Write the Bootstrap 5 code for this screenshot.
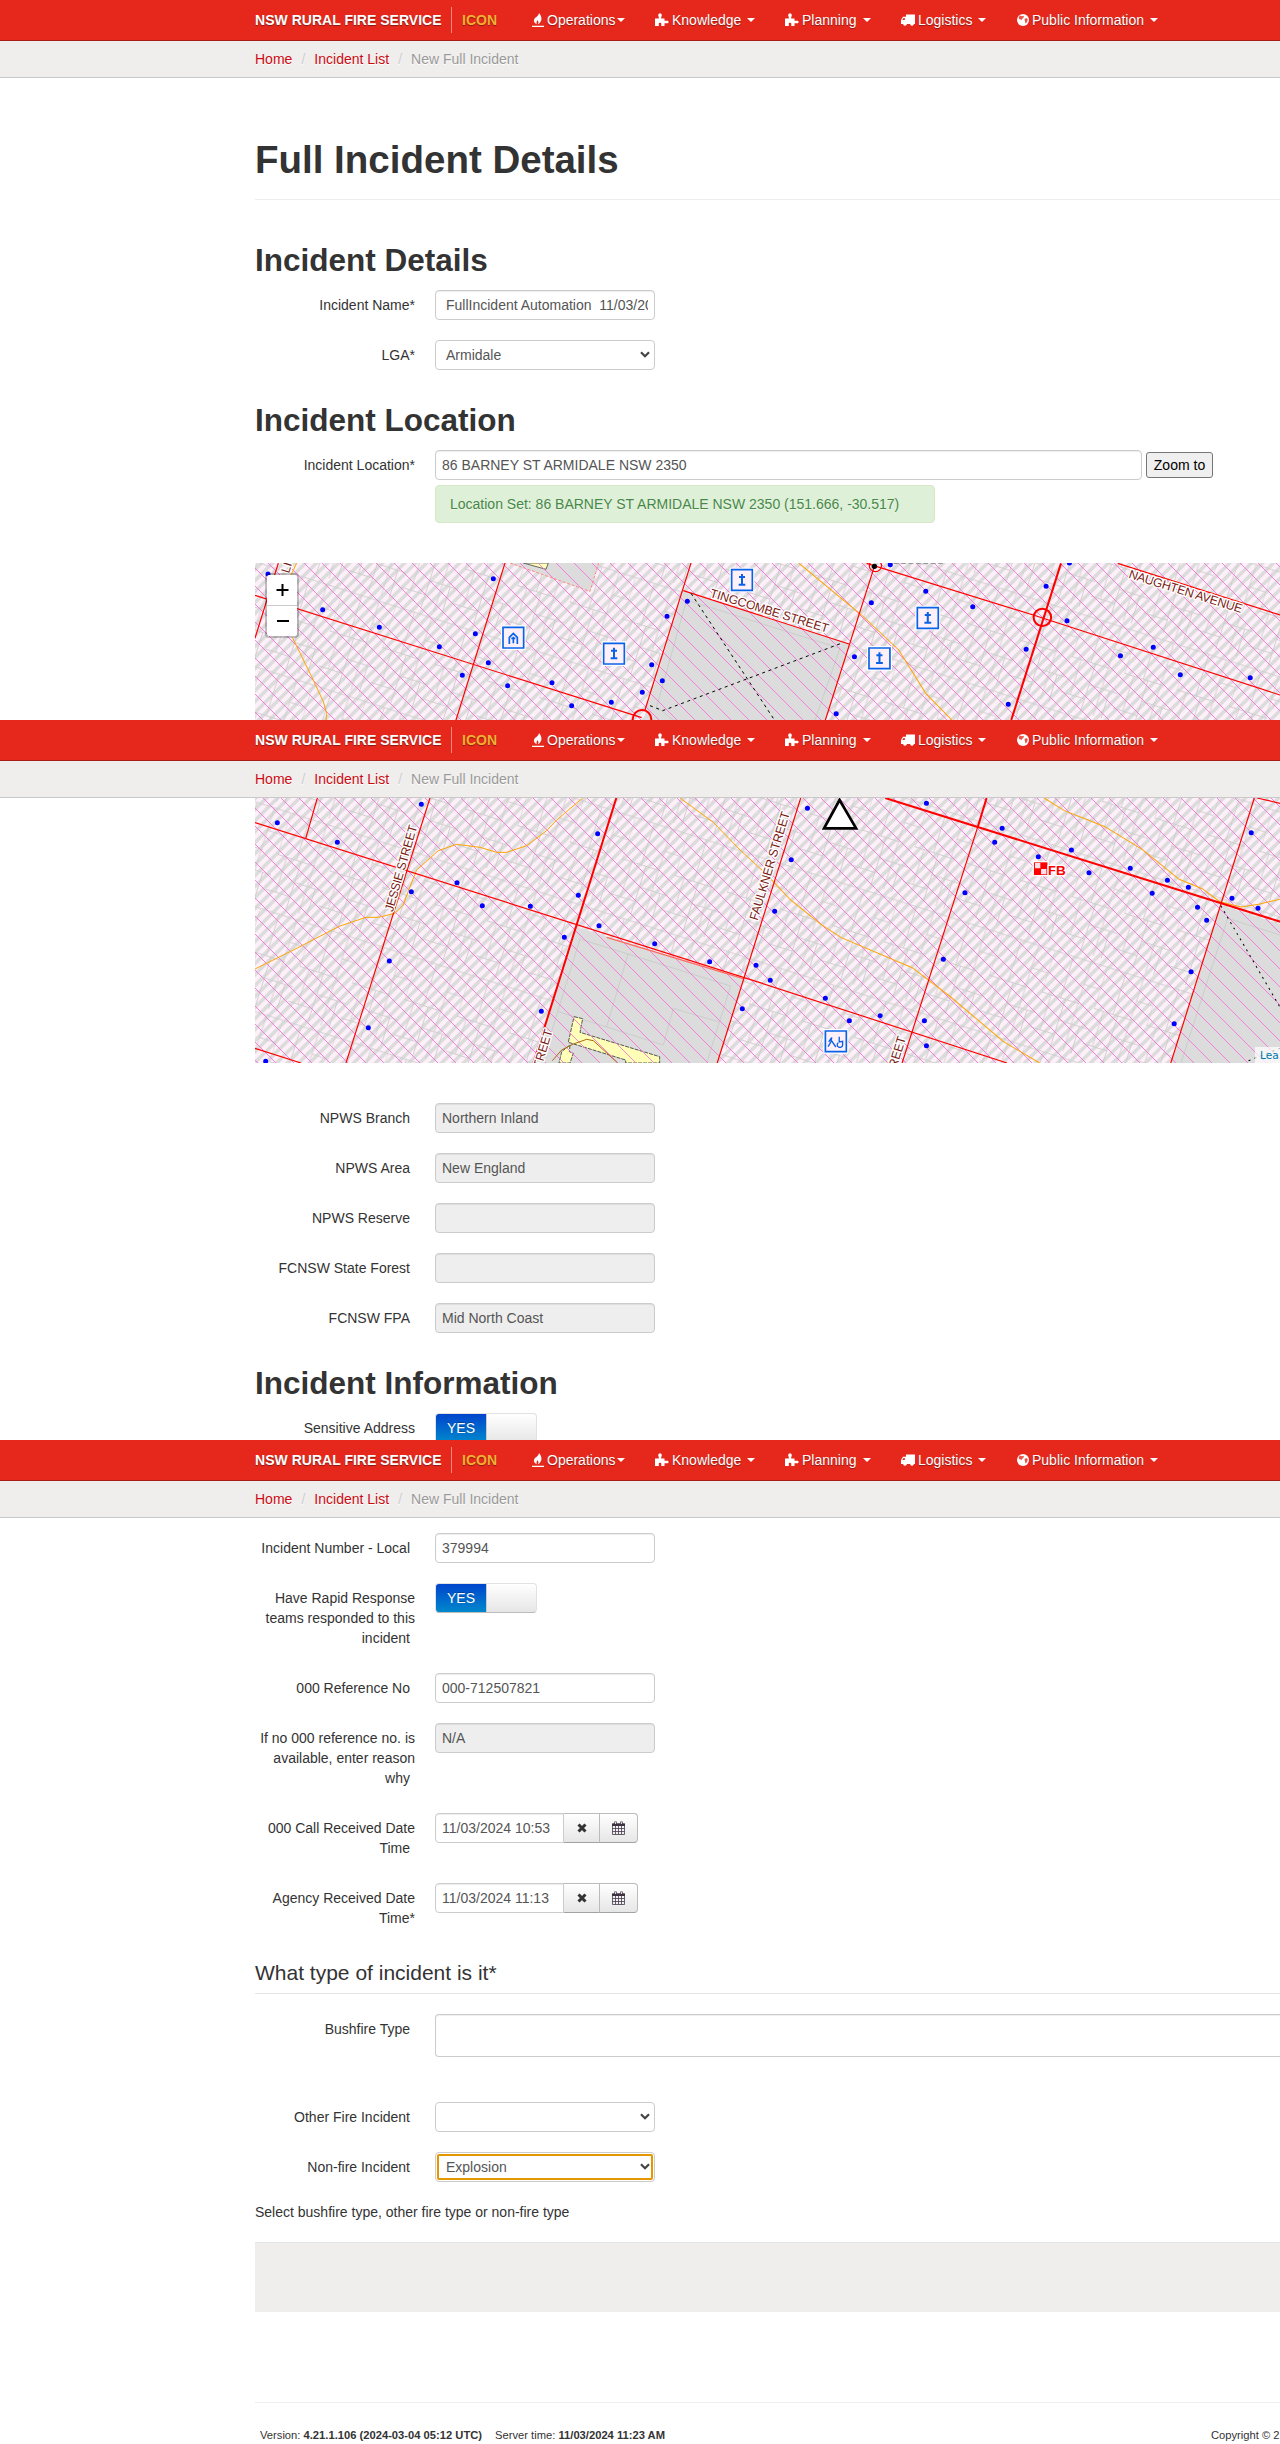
<!DOCTYPE html>
<html lang="en">
<head>
<meta charset="utf-8">
<title>New Full Incident</title>
<link rel="stylesheet" href="https://cdn.jsdelivr.net/npm/bootstrap@5.3.0/dist/css/bootstrap.min.css">
<style>
body{font:14px/20px "Liberation Sans",Arial,sans-serif;color:#333;background:#fff;overflow-x:hidden}
.frame{height:720px;overflow:hidden}
.frame-last{height:1004px}
.inner{margin-left:255px}
.topbar{height:41px;padding:0 0 0 255px;background:#e6281c;border-bottom:1px solid #a81e16;color:#fff;flex-wrap:nowrap;justify-content:flex-start;align-items:flex-start;text-shadow:0 1px 1px rgba(0,0,0,.4)}
.brand{width:196px;font-weight:700;line-height:20px;margin-top:10px;white-space:nowrap;letter-spacing:.02px}
.brand-app{width:81px;margin-top:7px;height:26px;line-height:26px;padding-left:10px;border-left:1px solid #f0867f;color:#f3b033;font-weight:700}
.menu-item{margin-top:10px;display:flex;align-items:center;white-space:nowrap;height:20px}
.menu-item svg{flex:none;fill:#fff;margin-right:3px}
.menu-item i{border:4px solid transparent;border-top-color:#fff;border-bottom:0;margin-left:6px}
.w-ops{width:123px}.w-know{width:130px}.w-plan,.w-logi{width:116px}
.w-ops i{margin-left:2px}
.crumbs{height:37px;background:#efeeed;border-bottom:1px solid #c9c9c9;padding:8px 0 0 255px;margin:0;text-shadow:0 1px 0 #fff;color:#999}
.crumbs a{color:#cb0a10;text-decoration:none}
.crumbs b{font-weight:400;color:#ccc;width:22px;text-align:center}
h1,h2{font-weight:700;line-height:40px;margin:0}
h1{font-size:38.5px}
h2{font-size:31.5px;margin-bottom:10px}
.title-wrap{padding-top:62px;height:122px;border-bottom:1px solid #eee;margin-bottom:40px}
.field+h2{margin-top:30px}
.field{display:flex;margin-bottom:20px}
.field>label{width:160px;padding-top:5px;margin:0 20px 5px 0;text-align:right;flex:none}
.field>label.opt::after{content:"";display:inline-block;width:5px}
.ctl{font:14px/20px "Liberation Sans",Arial,sans-serif;width:220px;height:30px;padding:4px 6px;border:1px solid #ccc;border-radius:4px;color:#555;background-color:#fff;box-shadow:inset 0 1px 1px rgba(0,0,0,.075);white-space:pre;overflow:hidden;flex:none}
.ctl.off{background:#eee}
.ctl.pad{padding-left:10px}
.ctl.addr{width:707px}
.clip span{display:block;overflow:hidden;width:202px}
.pick{display:flex;justify-content:space-between;padding:4px 4px 4px 10px;box-shadow:none}
.pick svg{margin-top:6px}
.focusring{outline:2px solid #e59700;outline-offset:-4px}
.zoombtn{font:14px/20px "Liberation Sans",Arial,sans-serif;border:1px solid #767676;border-radius:3px;background:#efefef;color:#000;padding:0;width:67px;height:26px;margin:2px 0 0 4px}
.okbox{width:500px;height:38px;margin:-20px 0 40px 180px;padding:8px 14px;background:#dff0d8;border:1px solid #d6e9c6;border-radius:4px;color:#468847;text-shadow:0 1px 0 rgba(255,255,255,.5)}
.mapbox{position:relative;width:1025px;overflow:hidden;line-height:0}
.mapbox text{font-family:"Liberation Sans",Arial,sans-serif;fill:#7a1a12;stroke:#fff;stroke-width:8px;paint-order:stroke;stroke-linejoin:round;font-size:37px}
.zoomctl{position:absolute;left:10px;top:10px;width:34px;height:65px;border:2px solid rgba(0,0,0,.22);border-radius:4px;background:#fff;background-clip:padding-box;display:flex;flex-direction:column}
.zoomctl svg{height:30px;width:30px}
.zoomctl svg+svg{border-top:1px solid #ccc;height:31px}
.attrib{position:absolute;right:0;bottom:0;height:16px;line-height:16px;padding-left:5px;background:rgba(255,255,255,.7);color:#0078a8;font-family:"DejaVu Sans",sans-serif;font-size:10.5px;width:25px;white-space:nowrap}
.toggle{display:flex;width:102px;height:30px;border:1px solid #e2e2e2;border-bottom-color:#bbb;border-radius:4px;overflow:hidden;background:linear-gradient(#fff,#e6e6e6)}
.toggle span{width:51px;border-right:1px solid #ccc;background:linear-gradient(#04c,#08c);color:#fff;text-align:center;line-height:28px;text-shadow:0 -1px 0 rgba(0,0,0,.25)}
.stamp{width:129px;border-radius:4px 0 0 4px}
.gbtn{height:30px;border:1px solid #bbb;border-left-width:0;border-bottom-color:#a2a2a2;background:linear-gradient(#fff,#e6e6e6);display:flex;align-items:center;justify-content:center}
.gx{width:36px}.gc{width:38px;border-radius:0 4px 4px 0}
.legend-q{font-size:21px;line-height:40px;border-bottom:1px solid #e5e5e5;margin-bottom:20px}
.area{height:43px;width:845px;border-right:0;border-radius:4px 0 0 4px}
.greybar{height:70px;background:#efeeed;border-top:1px solid #e5e5e5;margin-bottom:90px}
.foot{border-top:1px solid #eee;padding:22px 0 0 5px;font-size:11.2px;line-height:20px;display:flex;height:42px;white-space:nowrap}
</style>
</head>
<body>
<svg width="0" height="0" class="position-absolute">
<defs>
<symbol id="i-fire" viewBox="0 0 12 14"><path d="M7 0c2 2.500 2.800 4.500 2.300 7-.6 2.500-2 3.500-3.500 4.300 1-1.500.8-2.800-.2-4-1 1-1.500 2.500-.6 4-2.300-.8-3.300-2.300-3-4.300.3-2 2-2.500 3.500-4C6.500 2 7 1 7 0zM0 12.800h12v1.200H0z"/></symbol>
<symbol id="i-puzzle" viewBox="0 0 14 14"><path d="M0 5.500h3.800V4C2.800 3 3 .3 5 .3S7.200 3 6.200 4v1.500H9.500v2.300h2c2.800-1 2.800 3.200 0 2.400h-2V13H6.300v-2.300c0-1.300-2.500-1.300-2.500 0V13H0z"/></symbol>
<symbol id="i-truck" viewBox="0 0 14 14"><path d="M5 1.500h9V11h-1.200a1.800 1.800 0 0 1-3.600 0H5.800a1.800 1.800 0 0 1-3.600 0H0V7l2-3.200h3zM1.300 7h2.500V4.900H2.600z" fill-rule="evenodd"/><circle cx="4" cy="11" r="1.300"/><circle cx="11" cy="11" r="1.300"/></symbol>
<symbol id="i-globe" viewBox="0 0 12 12"><circle cx="6" cy="6" r="6"/><path d="M3 1.500l2 .8 1.500-.6.5 1.300-1.500 1.500-1 1.500-1.500-1-1 .3-.3-2zM7.500 5l2-1 1.300 1.500-.8 2.500-1.500 1.500-.5-2z" fill="#e6281c" opacity=".8"/></symbol>
<symbol id="i-chev" viewBox="0 0 10 7"><path d="M1 1.200l4 4 4-4" fill="none" stroke="#444" stroke-width="2.200"/></symbol>
<symbol id="i-x" viewBox="0 0 10 10"><path d="M1.500 1.500l7 7M8.500 1.500l-7 7" stroke="#333" stroke-width="3"/></symbol>
<symbol id="i-cal" viewBox="0 0 13 14"><path d="M.5 3h12v10.500H.5zM.5 7.500h12M.5 10.500h12M3.500 5v8.500M6.500 5v8.500M9.500 5v8.500" fill="none" stroke="#453a4c" stroke-width=".8"/><path d="M0 2.500h13V5H0z" fill="#3a3040"/><path d="M3.500.5v3M9.500.5v3" stroke="#453a4c" stroke-width="2.400"/><path d="M3.500 1v2M9.500 1v2" stroke="#fff" stroke-width=".8"/></symbol>
<pattern id="lots" width="165" height="300" patternUnits="userSpaceOnUse" patternTransform="rotate(17.6)"><path fill="none" stroke="#ccc" stroke-width="2.600" d="M0 20H165M0 150H120M60 20V150M115 20V300M0 150V20M30 150V260M75 150V300M115 90H165M75 215H165M0 260H75M140 215V300"/></pattern>
<pattern id="grey" x="45" width="33" height="33" patternUnits="userSpaceOnUse"><path fill="#fdf0f8" d="M0 0h33v33H0z"/><path fill="#dcdcdc" d="M0 33L33 0H18L0 18zM33 33V18L18 33z"/></pattern>
<pattern id="pink" x="45" width="54" height="54" patternUnits="userSpaceOnUse"><path stroke="#f76fdc" stroke-width="2.600" d="M-6-6L60 60M-6 48L6 60M48-6L60 6"/></pattern>
<g id="pin"><path d="M-33-33h66v66h-66z" fill="#fdf0f8" stroke="#fff" stroke-width="8"/><path d="M-31-31h62v62h-62z" fill="none" stroke="#0a62e8" stroke-width="5"/></g>
<g id="cross"><use href="#pin"/><path d="M0-18V14M-9-9H9M-10 14H10" stroke="#0a62e8" stroke-width="6" fill="none"/></g>
</defs>
</svg>

<section class="frame">
 <nav class="topbar navbar"><div class="brand">NSW RURAL FIRE SERVICE</div><div class="brand-app">ICON</div>
  <div class="menu-item w-ops"><svg width="12" height="14"><use href="#i-fire"/></svg>Operations<i></i></div>
  <div class="menu-item w-know"><svg width="14" height="14"><use href="#i-puzzle"/></svg>Knowledge<i></i></div>
  <div class="menu-item w-plan"><svg width="14" height="14"><use href="#i-puzzle"/></svg>Planning<i></i></div>
  <div class="menu-item w-logi"><svg width="14" height="14"><use href="#i-truck"/></svg>Logistics<i></i></div>
  <div class="menu-item"><svg width="12" height="12"><use href="#i-globe"/></svg>Public Information<i></i></div></nav>
 <div class="crumbs d-flex"><a href="#">Home</a><b>/</b><a href="#">Incident List</a><b>/</b><span>New Full Incident</span></div>
 <main class="inner">
  <div class="title-wrap"><h1>Full Incident Details</h1></div>
  <h2>Incident Details</h2>
  <div class="field"><label>Incident Name*</label><div class="ctl pad clip"><span>FullIncident Automation  11/03/2024</span></div></div>
  <div class="field mb-0"><label>LGA*</label><div class="ctl pick">Armidale<svg width="10" height="7"><use href="#i-chev"/></svg></div></div>
  <h2>Incident Location</h2>
  <div class="field mb-4 pb-0"><label>Incident Location*</label><div class="ctl addr">86 BARNEY ST ARMIDALE NSW 2350</div><button class="zoombtn">Zoom to</button></div>
  <div class="okbox" style="margin-top:-19px">Location Set: 86 BARNEY ST ARMIDALE NSW 2350 (151.666, -30.517)</div>
  <div class="mapbox">
   <svg width="1025" height="157" viewBox="45 39 3075 471">
    <path fill="url(#grey)" d="M45 39H3120V510H45z"/><path fill="url(#lots)" d="M45 39H3120V510H45z"/>
    <path d="M1330 122L1827 282 1756 510H1210zM810 39L1050 124 1076 39z" fill="#dcdcdc"/>
    <path d="M1340 150L1800 295 1725 510M1340 150L1250 470 1300 510" fill="none" stroke="#ccc" stroke-width="3"/>
    <path d="M850 39L918 58 925 39z" fill="#ffffb8" stroke="#666" stroke-width="3"/>
    <path d="M810 39L1050 124 1076 39" fill="none" stroke="#ff8a80" stroke-width="3" stroke-dasharray="9 5"/>
    <path fill="url(#pink)" d="M45 39H3120V510H45z"/>
    <path d="M170 39L152 78M157 262L215 380 250 455 260 490 258 510" fill="none" stroke="#ffa500" stroke-width="3"/>
    <g fill="none" stroke="#f00" stroke-width="3.500"><path d="M45 136L1205 503M115 39L45 265M795 39L648 510M1353 39L1215 480M1330 122L1827 282"/>
    <circle cx="1206" cy="508" r="28" stroke-width="6"/></g>
    <path d="M1353 130L1600 505M1230 467L1268 482 1809 278" fill="none" stroke="#000" stroke-width="3" stroke-dasharray="9 11"/>
    <path d="M84 72h0M248 179h0M418 232h0M598 290h0M760 86h0M706 251h0M745 338h0M667 376h0M803 407h0M936 398h0M995 467h0M1114 457h0M1207 427h0M1235 344h0M1267 392h0M1281 199h0M1342 154h0" stroke="#00f" stroke-width="15" stroke-linecap="round"/>
    <g transform="translate(-21.400 0) scale(1.014 1)">
     <path d="M1675 40L1860 195 1970 300 2050 430 2127 510" fill="none" stroke="#ffa500" stroke-width="3"/>
     <g fill="none" stroke="#f00" stroke-width="3.500"><path d="M1875 40L2368 195 3098 435 3120 441M1898 49L1753 510M2618 40L3120 202"/><path d="M2450 40L2303 510" stroke-width="6"/><circle cx="2395" cy="202" r="26" stroke-width="6"/><circle cx="1901" cy="47" r="18"/></g><circle cx="1898" cy="49" r="8"/>
     <path d="M1945 44h0M2050 124h0M1889 158h0M2189 170h0M1839 320h0M1785 491h0M2406 109h0M2475 39h0M2468 212h0M2347 298h0M2294 463h0M2626 317h0M2723 292h0M2803 374h0M3010 383h0" stroke="#00f" stroke-width="15" stroke-linecap="round"/>
     <use href="#cross" x="2056" y="204"/><use href="#cross" x="1913" y="325"/>
     <text transform="translate(2648 83) rotate(17.600)" textLength="351">NAUGHTEN AVENUE</text>
     <path d="M1955 40h145" stroke="#999" stroke-width="4" stroke-dasharray="14 8"/>
    </g>
    <use href="#cross" x="1506" y="90"/><use href="#cross" x="1122" y="311"/><use href="#pin" x="820" y="263"/>
    <path d="M808 282V262L820 250 832 262V282M814 265h12M820 260v20" fill="none" stroke="#0a62e8" stroke-width="5"/>
    <text transform="translate(1408 140) rotate(17)" textLength="370">TINGCOMBE STREET</text>
    <text transform="translate(147 71) rotate(-73)">LI</text>
   </svg>
   <div class="zoomctl"><svg viewBox="0 0 30 30"><path d="M9.500 15h12M15.500 9v12" stroke="#000" stroke-width="2"/></svg><svg viewBox="0 0 30 30"><path d="M10 15h12" stroke="#000" stroke-width="2"/></svg></div>
  </div>
 </main>
</section>

<section class="frame">
 <nav class="topbar navbar"><div class="brand">NSW RURAL FIRE SERVICE</div><div class="brand-app">ICON</div>
  <div class="menu-item w-ops"><svg width="12" height="14"><use href="#i-fire"/></svg>Operations<i></i></div>
  <div class="menu-item w-know"><svg width="14" height="14"><use href="#i-puzzle"/></svg>Knowledge<i></i></div>
  <div class="menu-item w-plan"><svg width="14" height="14"><use href="#i-puzzle"/></svg>Planning<i></i></div>
  <div class="menu-item w-logi"><svg width="14" height="14"><use href="#i-truck"/></svg>Logistics<i></i></div>
  <div class="menu-item"><svg width="12" height="12"><use href="#i-globe"/></svg>Public Information<i></i></div></nav>
 <div class="crumbs d-flex"><a href="#">Home</a><b>/</b><a href="#">Incident List</a><b>/</b><span>New Full Incident</span></div>
 <main class="inner">
  <div class="mapbox" style="margin-bottom:40px">
   <svg width="1025" height="265" viewBox="45 24 3075 795">
    <path fill="url(#grey)" d="M45 24H3120V819H45z"/><path fill="url(#lots)" d="M45 24H3120V819H45z"/>
    <path d="M1005 410L1510 565 1433 819H880zM2943 345L3120 402V819H2794z" fill="#dcdcdc"/>
    <path d="M1020 447L1472 588 1400 819M1020 447L930 740M1165 490L1100 710M955 665L1270 765 1300 655 1440 697M2963 385L3120 435M2963 385L2823 819" fill="none" stroke="#ccc" stroke-width="3"/>
    <path d="M1002 680L1028 686 1020 727 1259 800V819H1157V810L985 757zM990 765L988 785 1000 790 990 819H957L965 785z" fill="#ffffb8" stroke="#555" stroke-width="3" stroke-dasharray="12 3"/>
    <path fill="url(#pink)" d="M45 24H3120V819H45z"/>
    <path d="M937 812L965 780 1000 762 1040 748 1060 752 1133 819" fill="none" stroke="#a96a10" stroke-width="3"/>
    <path d="M45 537L160 480 300 408 378 382H415L465 370 490 345 510 290 530 240 595 182 650 163 720 172 770 187H800L860 167 920 122 950 90 1028 24M1320 24L1420 97 1500 180 1560 235" fill="none" stroke="#ffa500" stroke-width="3"/>
    <g fill="none" stroke="#f00" stroke-width="3.500"><path d="M45 98L1560 578 2301 819M232 24L197 146M570 24L318 819M45 775L183 819"/><path d="M1129 24L880 819" stroke-width="6"/></g>
    <path d="M1100 442L1510 566" stroke="#ff6a60" stroke-width="4"/>
    <path d="M112 98h0M292 157h0M544 43h0M651 278h0M514 305h0M727 347h0M871 349h0M1073 131h0M1015 316h0M973 442h0M1077 407h0M1244 461h0M1409 515h0M448 513h0M385 713h0M77 814h0M904 664h0M1507 656h0M1548 526h0" stroke="#00f" stroke-width="15" stroke-linecap="round"/>
    <g transform="translate(-21.400 0) scale(1.014 1)">
     <path d="M1560 235L1590 265 1650 330 1740 403 1800 443 2010 533 2120 618 2280 755 2387 819M2400 24L2460 62 2580 110 2690 178 2800 268 2868 296 2920 335 2983 351 3035 343 3120 322" fill="none" stroke="#ffa500" stroke-width="3"/>
     <g fill="none" stroke="#f00" stroke-width="3.500"><path d="M1680 24L1433 819M2204 110L1980 819M3022 24L2775 819M3030 24L3120 45"/><path d="M2230 24L2204 110M1930 24L3120 402" stroke-width="6"/></g>
     <path d="M2923 347L3120 690M3005 812L3120 766" fill="none" stroke="#000" stroke-width="3" stroke-dasharray="6 13"/>
     <path d="M1700 55h0M1652 209h0M1603 364h0M2052 40h0M2276 115h0M2254 157h0M2383 200h0M2481 180h0M2533 248h0M2655 235h0M2765 271h0M2827 292h0M2720 310h0M2854 352h0M2881 391h0M2956 325h0M3033 355h0M3013 128h0M2166 308h0M2102 508h0M2835 545h0M2785 701h0M1590 571h0M1753 625h0M1824 692h0M1915 677h0M2046 692h0M2052 767h0" stroke="#00f" stroke-width="15" stroke-linecap="round"/>
     <path d="M1795 30L1749 115H1844z" fill="#fff" stroke="#000" stroke-width="8"/>
     <path d="M2366 213h48v46h-48z" fill="#fff"/><path d="M2370 217h40v38h-40z" fill="#f00"/><path d="M2373 219h16v16h-16zM2391 237h16v16h-16z" fill="#ffe0e4"/>
     <text x="2412" y="255" style="font-weight:700;fill:#f00;font-size:40px" textLength="52">FB</text>
     <use href="#pin" x="1784" y="754"/><path d="M1772 742L1769 756 1761 770M1770 744L1763 756M1771 752L1784 771M1794 740V756L1804 754V764A8 8 0 1 1 1791 758" fill="none" stroke="#0a62e8" stroke-width="4"/>
     <text transform="translate(1552 393) rotate(-73.500)" textLength="338">FAULKNER STREET</text>
     <text transform="translate(1950 880) rotate(-73)" textLength="143">STREET</text>
    </g>
    <text transform="translate(458 367) rotate(-74)" textLength="268">JESSIE STREET</text>
    <text transform="translate(896 859) rotate(-73)" textLength="143">STREET</text>
   </svg>
   <div class="attrib">Lea</div>
  </div>
  <div class="field"><label class="opt">NPWS Branch</label><div class="ctl off">Northern Inland</div></div>
  <div class="field"><label class="opt">NPWS Area</label><div class="ctl off">New England</div></div>
  <div class="field"><label class="opt">NPWS Reserve</label><div class="ctl off"></div></div>
  <div class="field"><label class="opt">FCNSW State Forest</label><div class="ctl off"></div></div>
  <div class="field mb-0"><label class="opt">FCNSW FPA</label><div class="ctl off">Mid North Coast</div></div>
  <h2>Incident Information</h2>
  <div class="field"><label>Sensitive Address</label><div class="toggle"><span>YES</span></div></div>
 </main>
</section>

<section class="frame frame-last">
 <nav class="topbar navbar"><div class="brand">NSW RURAL FIRE SERVICE</div><div class="brand-app">ICON</div>
  <div class="menu-item w-ops"><svg width="12" height="14"><use href="#i-fire"/></svg>Operations<i></i></div>
  <div class="menu-item w-know"><svg width="14" height="14"><use href="#i-puzzle"/></svg>Knowledge<i></i></div>
  <div class="menu-item w-plan"><svg width="14" height="14"><use href="#i-puzzle"/></svg>Planning<i></i></div>
  <div class="menu-item w-logi"><svg width="14" height="14"><use href="#i-truck"/></svg>Logistics<i></i></div>
  <div class="menu-item"><svg width="12" height="12"><use href="#i-globe"/></svg>Public Information<i></i></div></nav>
 <div class="crumbs d-flex"><a href="#">Home</a><b>/</b><a href="#">Incident List</a><b>/</b><span>New Full Incident</span></div>
 <main class="inner" style="padding-top:15px">
  <div class="field"><label class="opt">Incident Number - Local</label><div class="ctl">379994</div></div>
  <div class="field"><label class="opt">Have Rapid Response teams responded to this incident</label><div class="toggle"><span>YES</span></div></div>
  <div class="field"><label class="opt">000 Reference No</label><div class="ctl">000-712507821</div></div>
  <div class="field"><label class="opt">If no 000 reference no. is available, enter reason why</label><div class="ctl off">N/A</div></div>
  <div class="field"><label class="opt">000 Call Received Date Time</label><div class="ctl stamp">11/03/2024 10:53</div><div class="gbtn gx"><svg width="10" height="10"><use href="#i-x"/></svg></div><div class="gbtn gc"><svg width="13" height="14"><use href="#i-cal"/></svg></div></div>
  <div class="field"><label>Agency Received Date Time*</label><div class="ctl stamp">11/03/2024 11:13</div><div class="gbtn gx"><svg width="10" height="10"><use href="#i-x"/></svg></div><div class="gbtn gc"><svg width="13" height="14"><use href="#i-cal"/></svg></div></div>
  <div class="legend-q">What type of incident is it*</div>
  <div class="field" style="margin-bottom:45px"><label class="opt">Bushfire Type</label><div class="ctl area"></div></div>
  <div class="field"><label class="opt">Other Fire Incident</label><div class="ctl pick"><span></span><svg width="10" height="7"><use href="#i-chev"/></svg></div></div>
  <div class="field"><label class="opt">Non-fire Incident</label><div class="ctl pick focusring">Explosion<svg width="10" height="7"><use href="#i-chev"/></svg></div></div>
  <p style="margin:0 0 20px">Select bushfire type, other fire type or non-fire type</p>
  <div class="greybar"></div>
  <footer class="foot"><span>Version: <strong>4.21.1.106 (2024-03-04 05:12 UTC)</strong></span><span style="margin-left:13px">Server time: <strong>11/03/2024 11:23 AM</strong></span><span class="ms-auto" style="width:69px">Copyright © 2</span></footer>
 </main>
</section>
<script src="https://cdn.jsdelivr.net/npm/bootstrap@5.3.0/dist/js/bootstrap.bundle.min.js"></script>
</body>
</html>
